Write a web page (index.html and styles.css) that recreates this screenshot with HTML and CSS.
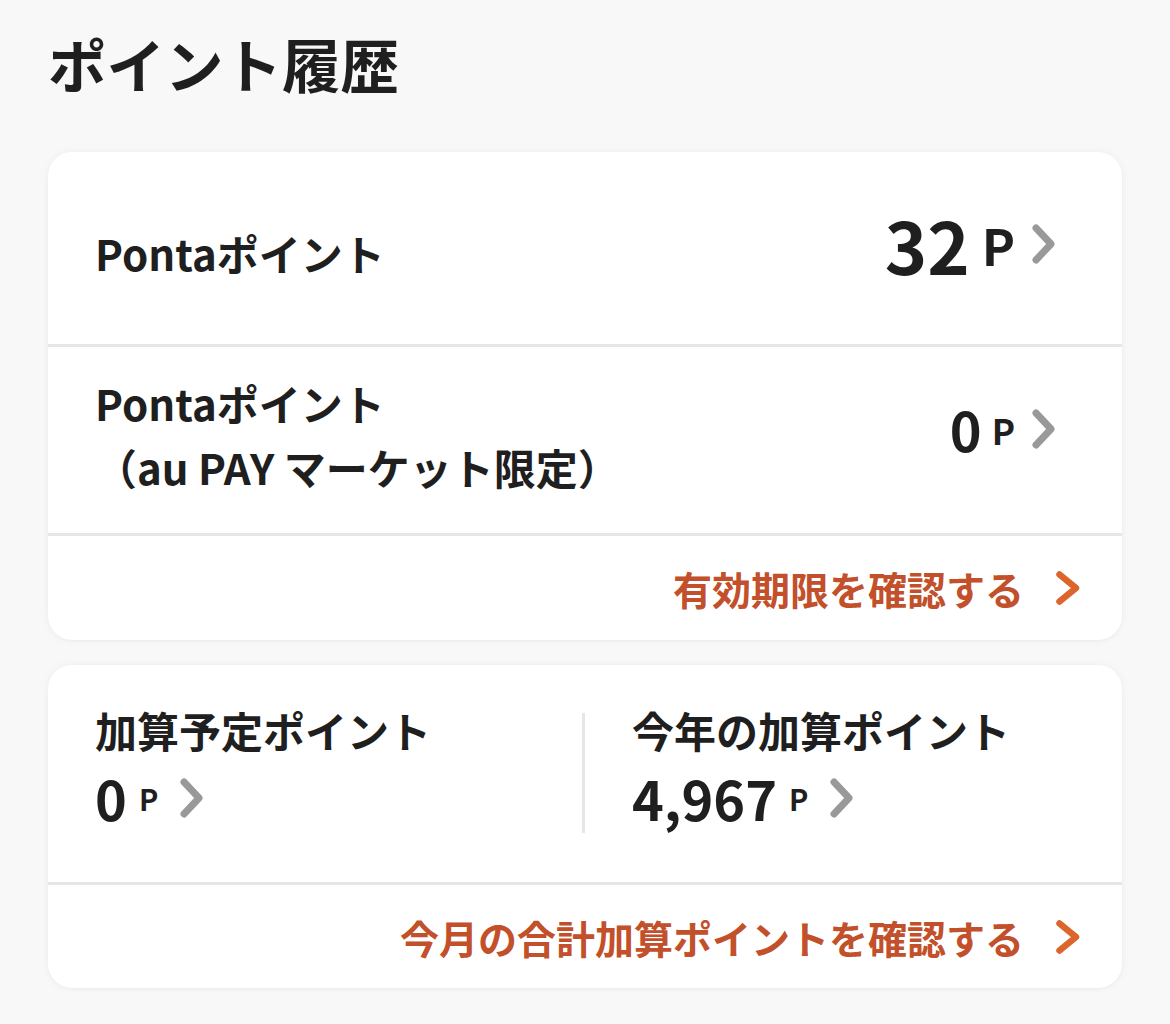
FILE: index.html
```html
<!DOCTYPE html>
<html lang="ja">
<head>
<meta charset="utf-8">
<title>ポイント履歴</title>
<link rel="stylesheet" href="styles.css">
</head>
<body>
<main class="page">
  <h1 class="title">ポイント履歴</h1>

  <section class="card">
    <div class="row row-main">
      <div class="label label-main">Pontaポイント</div>
      <div class="value value-main">
        <span class="num num-xl">32</span>
        <span class="unit unit-xl">P</span>
        <svg class="chev" viewBox="0 0 24 40" width="24" height="40"><polyline points="4,4 19,20 4,36"/></svg>
      </div>
    </div>
    <div class="row row-sub">
      <div class="label label-sub">Pontaポイント<br>（au PAY マーケット限定）</div>
      <div class="value value-sub">
        <span class="num num-md">0</span>
        <span class="unit unit-md">P</span>
        <svg class="chev" viewBox="0 0 24 40" width="24" height="40"><polyline points="4,4 19,20 4,36"/></svg>
      </div>
    </div>
    <a class="link-row" href="#">
      <span class="link-text">有効期限を確認する</span>
      <svg class="chev-link" viewBox="0 0 24 34" width="24" height="34"><polyline points="3.5,3.5 20,17 3.5,30.5"/></svg>
    </a>
  </section>

  <section class="card">
    <div class="split">
      <div class="col">
        <div class="label">加算予定ポイント</div>
        <div class="value">
          <span class="num num-md">0</span>
          <span class="unit unit-sm">P</span>
          <svg class="chev chev-col" viewBox="0 0 24 40" width="24" height="40"><polyline points="4,4 19,20 4,36"/></svg>
        </div>
      </div>
      <div class="col col-right">
        <div class="label">今年の加算ポイント</div>
        <div class="value">
          <span class="num num-md">4,967</span>
          <span class="unit unit-sm">P</span>
          <svg class="chev chev-col" viewBox="0 0 24 40" width="24" height="40"><polyline points="4,4 19,20 4,36"/></svg>
        </div>
      </div>
    </div>
    <a class="link-row" href="#">
      <span class="link-text">今月の合計加算ポイントを確認する</span>
      <svg class="chev-link" viewBox="0 0 24 34" width="24" height="34"><polyline points="3.5,3.5 20,17 3.5,30.5"/></svg>
    </a>
  </section>
</main>
</body>
</html>
```

FILE: styles.css
```css
* { box-sizing: border-box; }

html, body {
  margin: 0;
  padding: 0;
  background: #f8f8f9;
}

body {
  font-family: "Noto Sans CJK JP", "Noto Sans", sans-serif;
  color: #1f1f1f;
  font-weight: 700;
}

.page {
  padding: 0 48px;
}

.title {
  margin: 0 0 49px;
  padding-top: 22px;
  font-size: 58.5px;
  line-height: 81px;
  font-weight: 700;
  letter-spacing: 0;
}

.card {
  background: #fff;
  border-radius: 24px;
  box-shadow: 0 0 10px rgba(0, 0, 0, 0.045), 0 1px 3px rgba(0, 0, 0, 0.03);
  margin-bottom: 25px;
  overflow: hidden;
}

.row {
  display: flex;
  align-items: center;
  justify-content: space-between;
  padding: 0 66px 0 47px;
  border-bottom: 3px solid #e6e6e6;
}

.row-main { height: 195px; }
.row-sub { height: 189px; }

.label {
  font-size: 42px;
  line-height: 64px;
}

.label-main { margin-top: 10px; }
.label-sub { margin-bottom: 10px; }

.value {
  display: flex;
  align-items: center;
}

.value-main { margin-bottom: 8px; }
.value-sub { margin-bottom: 22px; }

.num {
  line-height: 1;
}

.num-xl { font-size: 72px; }
.num-md { font-size: 54px; }

.unit { line-height: 1; margin-left: 12px; }
.unit-xl { font-size: 50px; margin-left: 12px; }
.unit-md { font-size: 35px; margin-left: 10px; }
.unit-sm { font-size: 29px; margin-left: 12px; }

.chev {
  margin-left: 17px;
  fill: none;
  stroke: #999999;
  stroke-width: 7;
  stroke-linecap: round;
  stroke-linejoin: round;
}

.chev-col { margin-left: 22px; }

.link-row {
  display: flex;
  align-items: center;
  justify-content: flex-end;
  height: 104px;
  padding-right: 42px;
  text-decoration: none;
}

.card .split + .link-row { height: 103px; }

.link-text {
  font-size: 39px;
  line-height: 56px;
  color: #c2502b;
}

.chev-link {
  margin-left: 32px;
  fill: none;
  stroke: #dc652c;
  stroke-width: 6.5;
  stroke-linecap: round;
  stroke-linejoin: round;
}

.split {
  display: flex;
  padding: 43px 0 49px;
  border-bottom: 3px solid #e6e6e6;
}

.col {
  flex: 1 1 0;
  display: flex;
  flex-direction: column;
  gap: 11px;
  padding-left: 47px;
}

.col .label {
  line-height: 44px;
}

.col .value {
  height: 70px;
}

.col-right {
  position: relative;
}

.col-right::before {
  content: "";
  position: absolute;
  left: -3px;
  top: 5px;
  bottom: 0;
  width: 3px;
  background: #e6e6e6;
}
```
